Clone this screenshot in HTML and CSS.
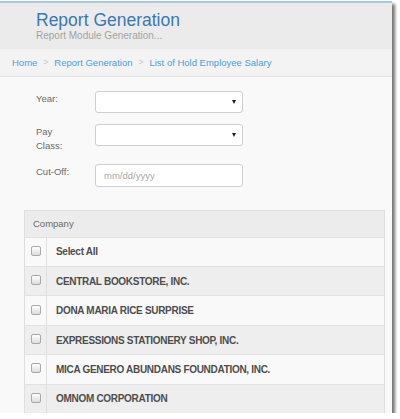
FILE: index.html
```html
<!DOCTYPE html>
<html>
<head>
<meta charset="utf-8">
<link rel="stylesheet" href="styles.css">
</head>
<body>
<div class="page">
  <div class="header">
    <div class="title">Report Generation</div>
    <div class="subtitle">Report Module Generation...</div>
  </div>
  <div class="crumbs">
    <span class="crumb">Home</span><span class="sep">&gt;</span><span class="crumb">Report Generation</span><span class="sep">&gt;</span><span class="crumb">List of Hold Employee Salary</span>
  </div>
  <div class="content">
    <div class="form">
      <div class="row">
        <div class="label">Year:</div>
        <div class="control select"><span class="arrow"></span></div>
      </div>
      <div class="row">
        <div class="label">Pay<br>Class:</div>
        <div class="control select"><span class="arrow"></span></div>
      </div>
      <div class="row">
        <div class="label">Cut-Off:</div>
        <div class="control date"><span class="ph">mm/dd/yyyy</span></div>
      </div>
    </div>
    <div class="table">
      <div class="thead">Company</div>
      <div class="tr odd"><div class="cb"><span class="box"></span></div><div class="name">Select All</div></div>
      <div class="tr even"><div class="cb"><span class="box"></span></div><div class="name">CENTRAL BOOKSTORE, INC.</div></div>
      <div class="tr odd"><div class="cb"><span class="box"></span></div><div class="name">DONA MARIA RICE SURPRISE</div></div>
      <div class="tr even"><div class="cb"><span class="box"></span></div><div class="name">EXPRESSIONS STATIONERY SHOP, INC.</div></div>
      <div class="tr odd"><div class="cb"><span class="box"></span></div><div class="name">MICA GENERO ABUNDANS FOUNDATION, INC.</div></div>
      <div class="tr even"><div class="cb"><span class="box"></span></div><div class="name">OMNOM CORPORATION</div></div>
    </div>
  </div>
</div>
</body>
</html>
```
FILE: styles.css
```css
* { box-sizing: border-box; }
html, body { margin: 0; padding: 0; background: #ffffff; }
body { font-family: "Liberation Sans", Arial, sans-serif; }

.page {
  margin-top: 1px;
  width: 392px;
  height: 412px;
  overflow: hidden;
  border-top: 2px solid #a9c9e4;
  background: #f9f9f9;
  box-shadow: 3px 3px 3px rgba(0,0,0,0.55);
  display: flex;
  flex-direction: column;
}

.header {
  height: 46px;
  background: #ebebeb;
  padding: 7px 0 0 36px;
}
.title {
  font-size: 17.5px;
  line-height: 20px;
  color: #3978b6;
}
.subtitle {
  font-size: 10px;
  line-height: 12px;
  color: #a3a3a3;
}

.crumbs {
  height: 28px;
  background: #f3f3f3;
  border-bottom: 1px solid #e3e3e3;
  padding-left: 12px;
  font-size: 9.5px;
  line-height: 27px;
  display: flex;
}
.crumb { color: #4a9fd9; }
.sep { color: #c4c4c4; margin: 0 6px 0 6px; font-size: 8.5px; }

.content {
  flex: 1;
  background: #f9f9f9;
  padding-top: 14px;
}

.form {
  display: flex;
  flex-direction: column;
  gap: 11px;
  padding-left: 36px;
}
.row { display: flex; align-items: flex-start; }
.label {
  width: 59px;
  font-size: 9.5px;
  line-height: 14px;
  color: #6a6a6a;
  padding-top: 1px;
}
.control {
  width: 148px;
  height: 22px;
  background: #ffffff;
  border: 1px solid #cfcfcf;
  border-radius: 3px;
  display: flex;
  align-items: center;
}
.select { justify-content: flex-end; padding-right: 6px; }
.arrow {
  width: 0; height: 0;
  border-left: 2.5px solid transparent;
  border-right: 2.5px solid transparent;
  border-top: 4px solid #1e1e1e;
}
.date { height: 23px; padding-left: 8px; }
.ph { font-size: 9.5px; color: #a8a8a8; }

.table {
  margin: 23px 0 0 24px;
  width: 361px;
  border: 1px solid #dedede;
  border-bottom: none;
}
.thead {
  height: 26px;
  background: #ececec;
  font-size: 9.5px;
  line-height: 26px;
  color: #6a6a6a;
  padding-left: 8px;
}
.tr {
  height: 29.4px;
  border-top: 1px solid #e2e2e2;
  display: flex;
}
.odd { background: #f9f9f9; }
.even { background: #eeeeee; }
.cb {
  width: 22px;
  border-right: 1px solid #e0e0e0;
  display: flex;
  align-items: center;
  justify-content: center;
  padding-bottom: 2px;
}
.box {
  width: 10px; height: 10px;
  border: 1px solid #a9a9a9;
  border-radius: 2px;
  background: linear-gradient(#ffffff, #dcdcdc);
}
.name {
  padding-left: 9px;
  display: flex;
  align-items: center;
  font-size: 10px;
  font-weight: bold;
  letter-spacing: -0.3px;
  color: #4d4d4d;
}
```
